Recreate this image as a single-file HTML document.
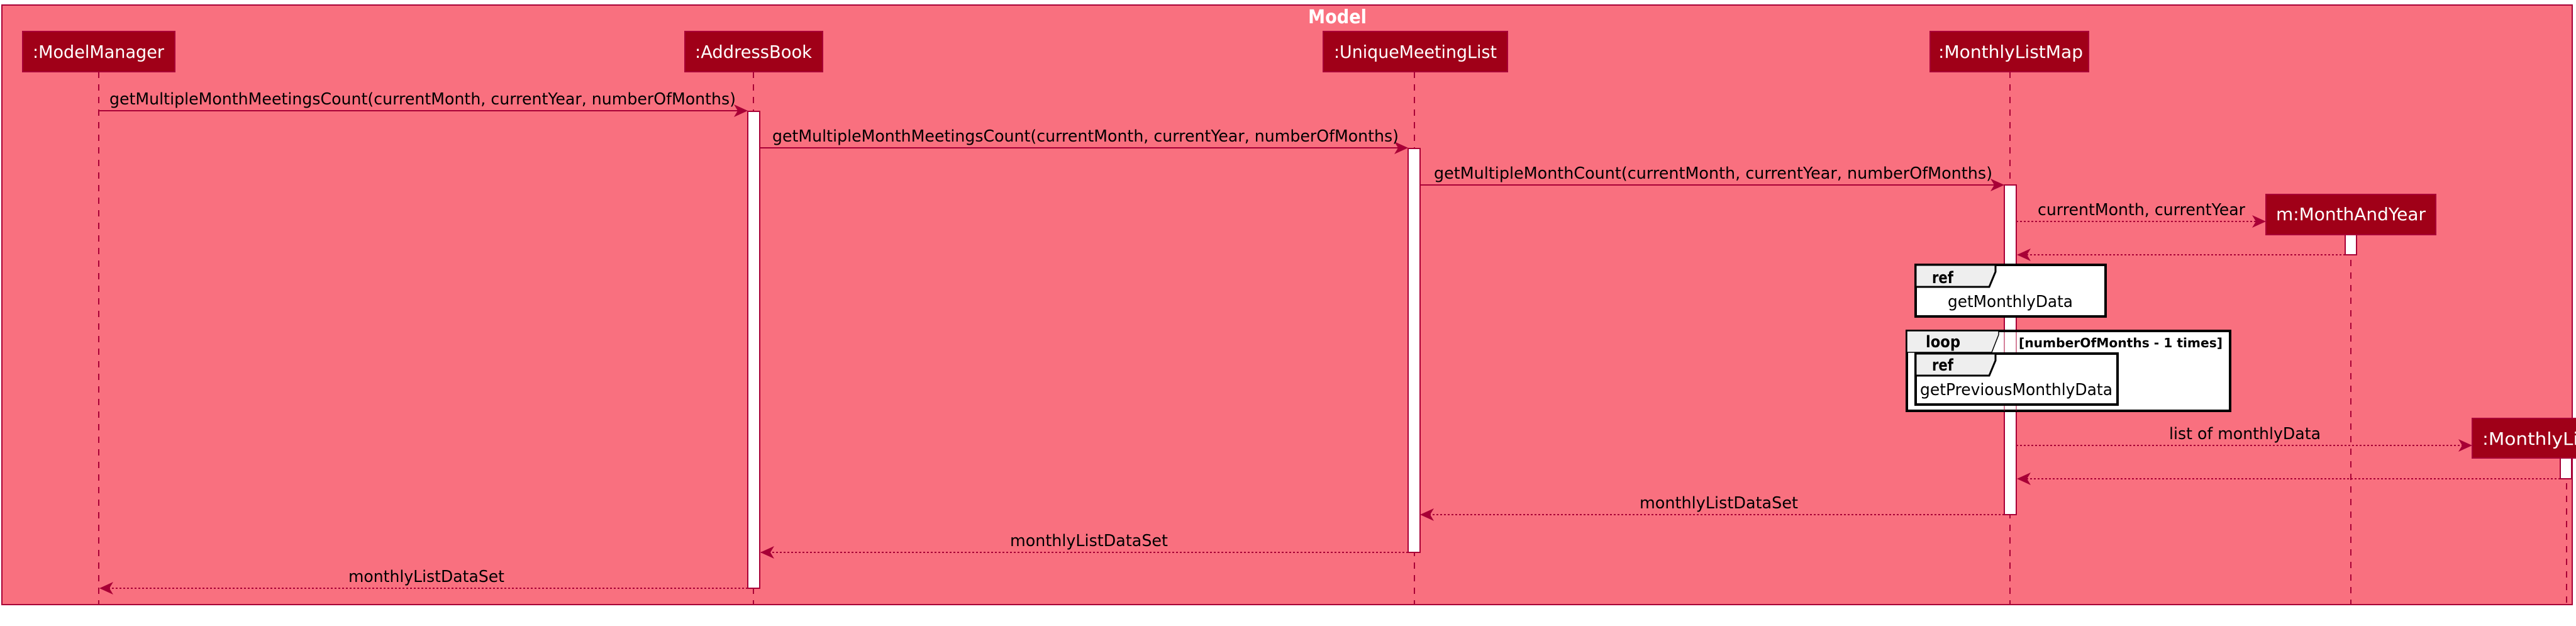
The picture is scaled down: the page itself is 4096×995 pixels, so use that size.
<!DOCTYPE html>
<html><head><meta charset="utf-8"><style>html,body{margin:0;padding:0;background:#fff}svg{display:block}</style></head>
<body>
<svg width="4096" height="995" viewBox="0 0 4096 995" xmlns="http://www.w3.org/2000/svg" font-family="'DejaVu Sans', 'Liberation Sans', sans-serif">
<rect x="3" y="8" width="4087" height="953" fill="#F9707F" stroke="#A80036" stroke-width="2"/>
<text x="2080" y="37" font-size="30" font-weight="bold" fill="#fff" textLength="93" lengthAdjust="spacingAndGlyphs">Model</text>
<g stroke="#A80036" stroke-width="2" stroke-dasharray="10,10">
<line x1="157" y1="114" x2="157" y2="961"/>
<line x1="1198" y1="114" x2="1198" y2="961"/>
<line x1="2249" y1="114" x2="2249" y2="961"/>
<line x1="3196" y1="114" x2="3196" y2="961"/>
<line x1="3738" y1="373" x2="3738" y2="961"/>
<line x1="4081" y1="728" x2="4081" y2="961"/>
</g>
<g fill="#A00018" stroke="#A80036" stroke-width="2">
<rect x="36" y="50" width="242" height="64"/>
<rect x="1089" y="50" width="219" height="64"/>
<rect x="2104" y="50" width="293" height="64"/>
<rect x="3069" y="50" width="252" height="64"/>
<rect x="3603" y="309" width="270" height="64"/>
<rect x="3931" y="665" width="170" height="63"/>
</g>
<g fill="#fff" font-size="28">
<text x="52" y="92" textLength="209" lengthAdjust="spacingAndGlyphs">:ModelManager</text>
<text x="1105" y="92" textLength="186" lengthAdjust="spacingAndGlyphs">:AddressBook</text>
<text x="2121" y="92" textLength="259" lengthAdjust="spacingAndGlyphs">:UniqueMeetingList</text>
<text x="3082" y="92" textLength="230" lengthAdjust="spacingAndGlyphs">:MonthlyListMap</text>
<text x="3619" y="350" textLength="238" lengthAdjust="spacingAndGlyphs">m:MonthAndYear</text>
<text x="3947" y="707" textLength="250" lengthAdjust="spacingAndGlyphs">:MonthlyListData</text>
</g>
<g fill="#fff" stroke="#A80036" stroke-width="2">
<rect x="1189" y="177" width="19" height="758"/>
<rect x="2239" y="236" width="19" height="642"/>
<rect x="3187" y="294" width="19" height="524"/>
<rect x="3729" y="373" width="18" height="32"/>
<rect x="4071" y="728" width="18" height="33"/>
</g>
<g stroke="#A80036" stroke-width="2" fill="none">
<line x1="157" y1="176" x2="1187" y2="176"/>
<line x1="1208" y1="235" x2="2237" y2="235"/>
<line x1="2258" y1="294" x2="3185" y2="294"/>
<g stroke-dasharray="3,3">
<line x1="3206" y1="352" x2="3601" y2="352"/>
<line x1="3729" y1="405" x2="3208" y2="405"/>
<line x1="3206" y1="708" x2="3929" y2="708"/>
<line x1="4071" y1="761" x2="3208" y2="761"/>
<line x1="3187" y1="818" x2="2260" y2="818"/>
<line x1="2239" y1="878" x2="1210" y2="878"/>
<line x1="1189" y1="935" x2="159" y2="935"/>
</g>
</g>
<g fill="#A80036">
<polygon points="1189,176 1167,166 1173,176 1167,186"/>
<polygon points="2239,235 2217,225 2223,235 2217,245"/>
<polygon points="3187,294 3165,284 3171,294 3165,304"/>
<polygon points="3603,352 3581,342 3587,352 3581,362"/>
<polygon points="3931,708 3909,698 3915,708 3909,718"/>
<polygon points="3207,405 3229,395 3223,405 3229,415"/>
<polygon points="3207,761 3229,751 3223,761 3229,771"/>
<polygon points="2258,818 2280,808 2274,818 2280,828"/>
<polygon points="1209,878 1231,868 1225,878 1231,888"/>
<polygon points="158,935 180,925 174,935 180,945"/>
</g>
<g fill="#000" font-size="26">
<text x="174" y="166" textLength="996" lengthAdjust="spacingAndGlyphs">getMultipleMonthMeetingsCount(currentMonth, currentYear, numberOfMonths)</text>
<text x="1228" y="225" textLength="996" lengthAdjust="spacingAndGlyphs">getMultipleMonthMeetingsCount(currentMonth, currentYear, numberOfMonths)</text>
<text x="2280" y="284" textLength="888" lengthAdjust="spacingAndGlyphs">getMultipleMonthCount(currentMonth, currentYear,  numberOfMonths)</text>
<text x="3240" y="342" textLength="330" lengthAdjust="spacingAndGlyphs">currentMonth, currentYear</text>
<text x="3449" y="698" textLength="241" lengthAdjust="spacingAndGlyphs">list of monthlyData</text>
<text x="2607" y="808" textLength="252" lengthAdjust="spacingAndGlyphs">monthlyListDataSet</text>
<text x="1606" y="868" textLength="251" lengthAdjust="spacingAndGlyphs">monthlyListDataSet</text>
<text x="554" y="925" textLength="248" lengthAdjust="spacingAndGlyphs">monthlyListDataSet</text>
</g>
<rect x="3046" y="421" width="302" height="82" fill="#fff" stroke="#000" stroke-width="4"/>
<path d="M3046,421 H3173 V432 L3163,456 H3046 Z" fill="#EEEEEE" stroke="#000" stroke-width="3"/>
<text x="3072" y="450" font-size="26" font-weight="bold" textLength="34" lengthAdjust="spacingAndGlyphs">ref</text>
<text x="3097" y="488" font-size="26" textLength="199" lengthAdjust="spacingAndGlyphs">getMonthlyData</text>
<rect x="3032" y="526" width="514" height="127" fill="#fff" stroke="#000" stroke-width="4"/>
<path d="M3032,526 H3178 V532 L3167,560 H3032 Z" fill="#EEEEEE" stroke="#000" stroke-width="1.5"/>
<rect x="3187" y="528" width="19" height="32" fill="#fff"/>
<line x1="3187" y1="528" x2="3187" y2="653" stroke="#A80036" stroke-width="1"/>
<line x1="3206" y1="528" x2="3206" y2="653" stroke="#A80036" stroke-width="1"/>
<text x="3062" y="552" font-size="26" font-weight="bold" textLength="55" lengthAdjust="spacingAndGlyphs">loop</text>
<text x="3210" y="552" font-size="20" font-weight="bold" textLength="324" lengthAdjust="spacingAndGlyphs">[numberOfMonths - 1 times]</text>
<rect x="3046" y="562" width="321" height="81" fill="#fff" stroke="#000" stroke-width="4"/>
<path d="M3046,562 H3173 V573 L3163,597 H3046 Z" fill="#EEEEEE" stroke="#000" stroke-width="3"/>
<text x="3072" y="589" font-size="26" font-weight="bold" textLength="34" lengthAdjust="spacingAndGlyphs">ref</text>
<text x="3053" y="628" font-size="26" textLength="306" lengthAdjust="spacingAndGlyphs">getPreviousMonthlyData</text>
</svg>
</body></html>
